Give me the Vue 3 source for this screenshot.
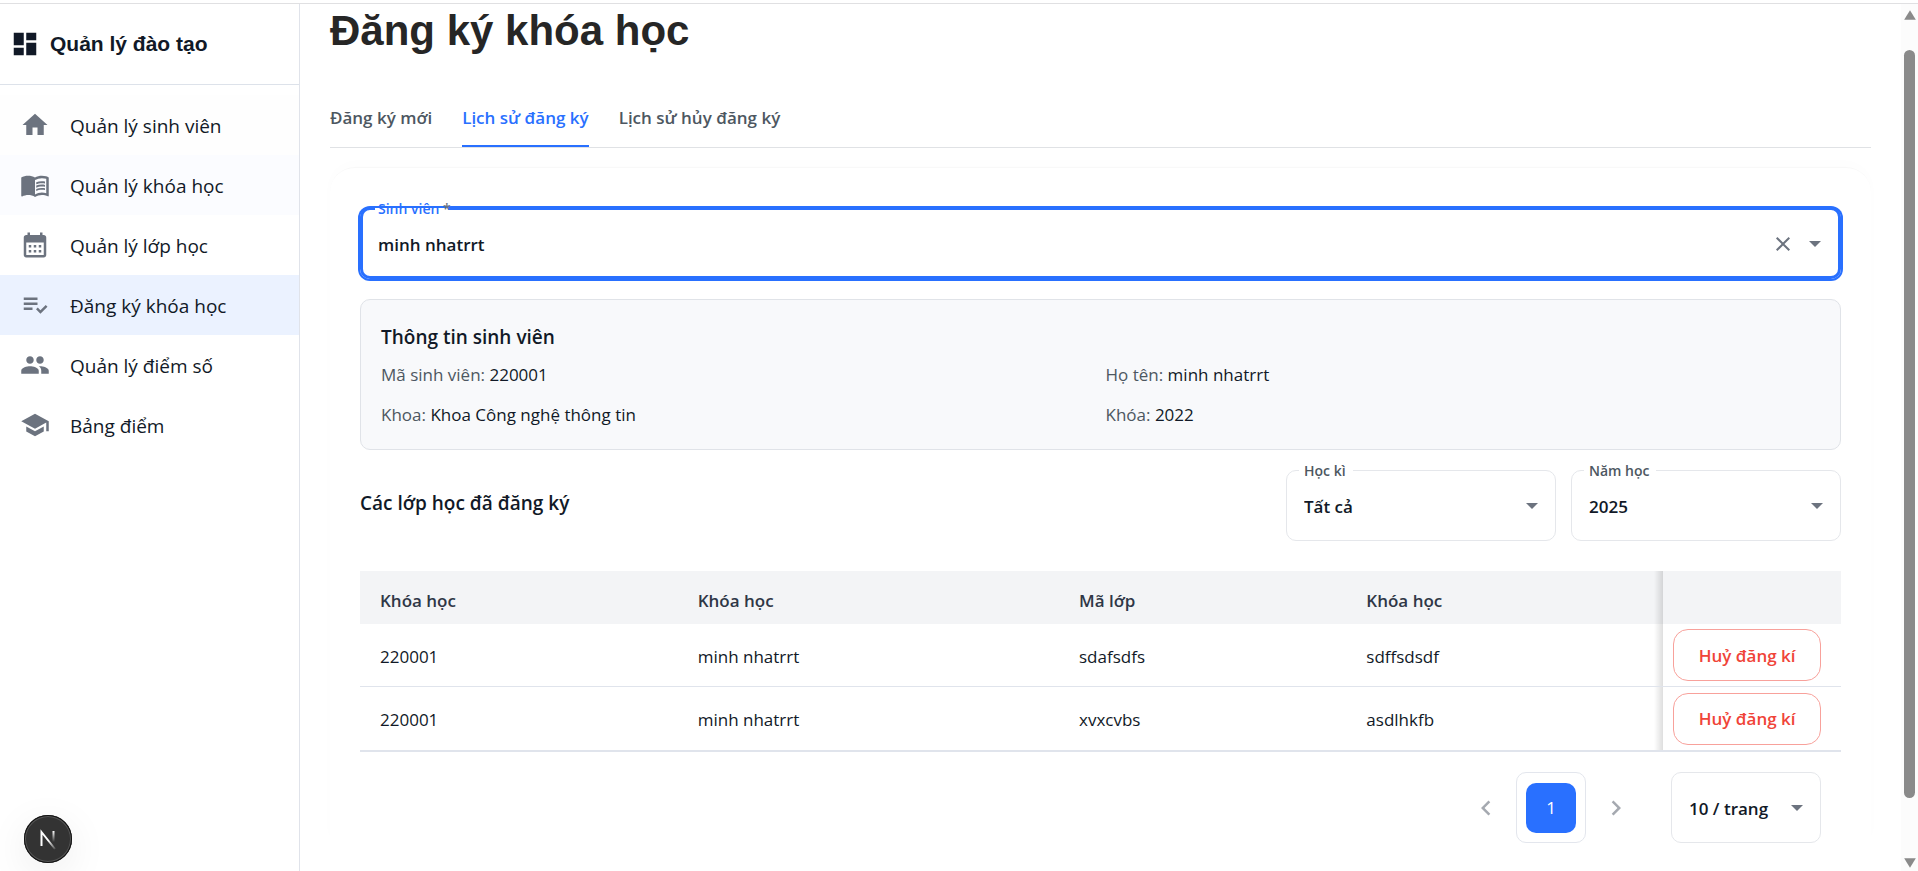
<script setup>
import { ref } from 'vue'

const navItems = [
  { label: 'Quản lý sinh viên', state: 'faint', icon: 'M10 20v-6h4v6h5v-8h3L12 3 2 12h3v8z' },
  {
    label: 'Quản lý khóa học',
    state: 'hovered',
    icon: 'M21 5c-1.11-.35-2.33-.5-3.5-.5-1.95 0-4.05.4-5.5 1.5-1.45-1.1-3.55-1.5-5.5-1.5S2.45 4.9 1 6v14.65c0 .25.25.5.5.5.1 0 .15-.05.25-.05C3.1 20.45 5.05 20 6.5 20c1.95 0 4.05.4 5.5 1.5 1.35-.85 3.8-1.5 5.5-1.5 1.65 0 3.35.3 4.75 1.05.1.05.15.05.25.05.25 0 .5-.25.5-.5V6c-.6-.45-1.25-.75-2-1zm0 13.5c-1.1-.35-2.3-.5-3.5-.5-1.7 0-4.15.65-5.5 1.5V8c1.35-.85 3.8-1.5 5.5-1.5 1.2 0 2.4.15 3.5.5v11.5zM17.5 10.5c.88 0 1.73.09 2.5.26V9.24c-.79-.15-1.64-.24-2.5-.24-1.7 0-3.24.29-4.5.83v1.66c1.13-.64 2.7-.99 4.5-.99zM13 12.49v1.66c1.13-.64 2.7-.99 4.5-.99.88 0 1.73.09 2.5.26V11.9c-.79-.15-1.64-.24-2.5-.24-1.7 0-3.24.3-4.5.83zM17.5 14.33c-1.7 0-3.24.29-4.5.83v1.66c1.13-.64 2.7-.99 4.5-.99.88 0 1.73.09 2.5.26v-1.52c-.79-.16-1.64-.24-2.5-.24z',
  },
  {
    label: 'Quản lý lớp học',
    icon: 'M19 4h-1V2h-2v2H8V2H6v2H5c-1.11 0-1.99.9-1.99 2L3 20c0 1.1.89 2 2 2h14c1.1 0 2-.9 2-2V6c0-1.1-.9-2-2-2zm0 16H5V10h14v10zM9 14H7v-2h2v2zm4 0h-2v-2h2v2zm4 0h-2v-2h2v2zm-8 4H7v-2h2v2zm4 0h-2v-2h2v2zm4 0h-2v-2h2v2z',
  },
  {
    label: 'Đăng ký khóa học',
    state: 'active',
    icon: 'M3 10h11v2H3zm0-4h11v2H3zm0 8h7v2H3zm17.59-2.07-4.25 4.24-2.12-2.12-1.41 1.41L16.34 19 22 13.34z',
  },
  {
    label: 'Quản lý điểm số',
    icon: 'M16 11c1.66 0 2.99-1.34 2.99-3S17.66 5 16 5c-1.66 0-3 1.34-3 3s1.34 3 3 3zm-8 0c1.66 0 2.99-1.34 2.99-3S9.66 5 8 5C6.34 5 5 6.34 5 8s1.34 3 3 3zm0 2c-2.33 0-7 1.17-7 3.5V19h14v-2.5c0-2.33-4.67-3.5-7-3.5zm8 0c-.29 0-.62.02-.97.05 1.16.84 1.97 1.97 1.97 3.45V19h6v-2.5c0-2.33-4.67-3.5-7-3.5z',
  },
  {
    label: 'Bảng điểm',
    icon: 'M5 13.18v4L12 21l7-3.82v-4L12 17l-7-3.82zM12 3 1 9l11 6 9-4.91V17h2V9L12 3z',
  },
]

const tabs = ['Đăng ký mới', 'Lịch sử đăng ký', 'Lịch sử hủy đăng ký']
const activeTab = ref(1)
const student = ref('minh nhatrrt')

const info = [
  ['Mã sinh viên:', '220001'],
  ['Họ tên:', 'minh nhatrrt'],
  ['Khoa:', 'Khoa Công nghệ thông tin'],
  ['Khóa:', '2022'],
]

const filters = [
  { id: 'semester', label: 'Học kì', value: 'Tất cả' },
  { id: 'year', label: 'Năm học', value: '2025' },
]

const columns = ['Khóa học', 'Khóa học', 'Mã lớp', 'Khóa học']
const rows = [
  ['220001', 'minh nhatrrt', 'sdafsdfs', 'sdffsdsdf'],
  ['220001', 'minh nhatrrt', 'xvxcvbs', 'asdlhkfb'],
]
</script>

<template>
  <div class="app">
    <aside class="sidebar">
      <div class="brand">
        <svg class="icon" viewBox="0 0 24 24"><path d="M3 13h8V3H3v10zm0 8h8v-6H3v6zm10 0h8V11h-8v10zm0-18v6h8V3h-8z" /></svg>
        <span>Quản lý đào tạo</span>
      </div>
      <nav class="nav">
        <a v-for="item in navItems" :key="item.label" href="#" class="nav-item" :class="item.state">
          <svg class="icon" viewBox="0 0 24 24"><path :d="item.icon" /></svg>
          <span>{{ item.label }}</span>
        </a>
      </nav>
      <button class="dev-badge" type="button" aria-label="Next.js">
        <svg viewBox="0 0 48 48">
          <defs>
            <linearGradient id="stem" x1="0" y1="0" x2="0" y2="1">
              <stop offset="0" stop-color="#fff" />
              <stop offset="1" stop-color="#fff" stop-opacity="0" />
            </linearGradient>
            <linearGradient id="slash" gradientUnits="userSpaceOnUse" x1="25" y1="25" x2="32" y2="34">
              <stop offset="0" stop-color="#fff" />
              <stop offset="1" stop-color="#fff" stop-opacity="0.1" />
            </linearGradient>
          </defs>
          <path d="M17.5 31V17l13.500 17" fill="none" stroke="url(#slash)" stroke-width="2" />
          <rect x="28.5" y="16" width="2" height="11" fill="url(#stem)" />
        </svg>
      </button>
    </aside>

    <main class="main">
      <h1>Đăng ký khóa học</h1>
      <div class="tabs" role="tablist">
        <button
          v-for="(tab, i) in tabs"
          :key="tab"
          type="button"
          role="tab"
          class="tab"
          :class="{ selected: i === activeTab }"
          :aria-selected="i === activeTab"
          @click="activeTab = i"
        >{{ tab }}</button>
      </div>

      <section class="card">
        <div class="field focused">
          <fieldset><legend>Sinh viên</legend></fieldset>
          <label for="student">Sinh viên <span>*</span></label>
          <input id="student" v-model="student" type="text" />
          <button type="button" class="clear" aria-label="Xóa" @click="student = ''">
            <svg viewBox="0 0 24 24"><path d="M19 6.41 17.59 5 12 10.59 6.41 5 5 6.41 10.59 12 5 17.59 6.41 19 12 13.41 17.59 19 19 17.59 13.41 12z" /></svg>
          </button>
          <svg class="arrow" viewBox="0 0 12 6"><path d="M0 0h12L6 6z" /></svg>
        </div>

        <div class="info">
          <h2>Thông tin sinh viên</h2>
          <div class="info-grid">
            <p v-for="[name, value] in info" :key="name"><span>{{ name }}</span> {{ value }}</p>
          </div>
        </div>

        <div class="toolbar">
          <h2>Các lớp học đã đăng ký</h2>
          <div v-for="f in filters" :key="f.id" class="field filter">
            <fieldset><legend>{{ f.label }}</legend></fieldset>
            <label :for="f.id">{{ f.label }}</label>
            <select :id="f.id"><option>{{ f.value }}</option></select>
            <svg class="arrow" viewBox="0 0 12 6"><path d="M0 0h12L6 6z" /></svg>
          </div>
        </div>

        <table>
          <colgroup>
            <col class="c1" /><col class="c2" /><col class="c3" /><col class="c4" /><col class="c5" />
          </colgroup>
          <thead>
            <tr>
              <th v-for="(c, i) in columns" :key="i">{{ c }}</th>
              <th class="pinned"></th>
            </tr>
          </thead>
          <tbody>
            <tr v-for="(row, r) in rows" :key="r">
              <td v-for="(cell, i) in row" :key="i">{{ cell }}</td>
              <td class="pinned"><button type="button" class="cancel">Huỷ đăng kí</button></td>
            </tr>
          </tbody>
        </table>

        <div class="pagination">
          <button type="button" class="step" aria-label="Trang trước">
            <svg viewBox="0 0 24 24"><path d="M15.41 7.41 14 6l-6 6 6 6 1.41-1.41L10.83 12z" /></svg>
          </button>
          <div class="pages"><button type="button" class="page">1</button></div>
          <button type="button" class="step" aria-label="Trang sau">
            <svg viewBox="0 0 24 24"><path d="M10 6 8.59 7.41 13.17 12l-4.58 4.59L10 18l6-6z" /></svg>
          </button>
          <div class="field page-size">
            <fieldset></fieldset>
            <select aria-label="Số dòng mỗi trang"><option>10 / trang</option></select>
            <svg class="arrow" viewBox="0 0 12 6"><path d="M0 0h12L6 6z" /></svg>
          </div>
        </div>
      </section>
    </main>

    <div class="scrollbar" aria-hidden="true">
      <svg viewBox="0 0 12 10"><path d="M6 1 11 9H1z" /></svg>
      <div class="thumb"></div>
      <svg viewBox="0 0 12 10"><path d="M6 9 11 1H1z" /></svg>
    </div>
  </div>
</template>

<style>
body {
  background: #fff;
}
</style>

<style scoped>
.app {
  box-sizing: border-box;
  display: flex;
  height: calc(100vh - 3px);
  margin-top: 3px;
  overflow: hidden;
  border-top: 1px solid #e0e0e2;
  font-family: 'Open Sans', 'Noto Sans', sans-serif;
  font-size: 17px;
  color: #111927;
}

.app *,
.app *::before,
.app *::after {
  box-sizing: border-box;
}

button,
input,
select {
  font: inherit;
  color: inherit;
  margin: 0;
  padding: 0;
  border: 0;
  background: none;
  outline: none;
}

h1,
h2,
p {
  margin: 0;
}

/* Sidebar */
.sidebar {
  position: relative;
  flex: 0 0 300px;
  border-right: 1px solid #e0e3ea;
}

.brand {
  display: flex;
  align-items: center;
  gap: 10px;
  height: 81px;
  padding-left: 10px;
  border-bottom: 1px solid #dde2ea;
  font: bold 21px 'Liberation Sans', Arial, sans-serif;
}

.icon {
  width: 30px;
  height: 30px;
  fill: #111927;
}

.nav {
  display: flex;
  flex-direction: column;
  padding-top: 10px;
}

.nav-item {
  display: flex;
  align-items: center;
  gap: 20px;
  height: 60px;
  padding-left: 20px;
  color: #111927;
  font-size: 19px;
  text-decoration: none;
}

.nav-item span {
  padding-top: 2px;
}

.nav-item .icon {
  fill: #6c737f;
}

.nav-item.faint {
  background: #fefefe;
}

.nav-item.hovered {
  background: #fbfcff;
}

.nav-item.active {
  background: #ebf2ff;
}

.dev-badge {
  position: absolute;
  left: 24px;
  bottom: 8px;
  width: 48px;
  height: 48px;
  border-radius: 50%;
  background: #333;
  box-shadow: inset 0 0 0 1px #111, inset 0 0 0 2px #555, 0 10px 40px rgba(0, 0, 0, 0.08);
}

.dev-badge svg {
  display: block;
  width: 48px;
  height: 48px;
}

/* Main */
.main {
  flex: 1;
  min-width: 0;
  padding: 0 30px;
}

h1 {
  font: bold 42px/54px 'Liberation Sans', Arial, sans-serif;
  color: #262626;
}

.tabs {
  display: flex;
  gap: 30px;
  height: 61px;
  margin-top: 29px;
  border-bottom: 1px solid #e0e2e5;
}

.tab {
  border-bottom: 2px solid transparent;
  color: #4d5761;
  font-weight: 600;
  padding-top: 2px;
  white-space: nowrap;
}

.tab.selected {
  border-color: #2970ff;
  color: #2970ff;
}

.card {
  margin-top: 19px;
  padding: 40px 30px 0;
  border-top: 1px solid #f8f8f8;
  border-radius: 25px 25px 0 0;
  box-shadow: 0 -4px 14px rgba(0, 0, 0, 0.01);
}

/* Outlined fields */
.field {
  position: relative;
  display: flex;
  align-items: center;
  height: 71px;
  padding: 0 18px;
  border-radius: 10px;
  font-weight: 600;
}

.field fieldset {
  position: absolute;
  inset: 0;
  top: -8px;
  min-width: 0;
  margin: 0;
  padding: 0 12px;
  border: 1px solid #e5e7eb;
  border-radius: 10px;
  pointer-events: none;
}

.field fieldset:empty {
  top: 0;
}

.field legend {
  height: 16px;
  padding: 0 6px;
  font-size: 14px;
  font-weight: 600;
  line-height: 16px;
  visibility: hidden;
}

.field label {
  position: absolute;
  top: -9px;
  left: 18px;
  color: #4d5761;
  font-size: 14px;
  font-weight: 600;
  line-height: 20px;
}

.field input,
.field select {
  flex: 1;
  min-width: 0;
  height: 50px;
  padding-top: 2px;
  appearance: none;
}

.arrow {
  width: 12px;
  height: 6px;
  fill: #6c737f;
  pointer-events: none;
}

.focused {
  padding-right: 20px;
  box-shadow: 0 0 0 2px #2970ff;
}

.focused fieldset {
  border: 3px solid #2970ff;
}

.focused label {
  color: #2970ff;
}

.focused label span {
  color: #6c737f;
}

.clear {
  width: 24px;
  height: 24px;
  margin-right: 14px;
}

.clear svg {
  display: block;
  width: 24px;
  height: 24px;
  fill: #6c737f;
}

/* Student summary */
.info {
  margin-top: 20px;
  padding: 20px;
  border: 1px solid #e0e3e8;
  border-radius: 10px;
  background: #f8f9fb;
}

h2 {
  font-size: 19px;
  font-weight: 600;
  line-height: 34px;
}

.info-grid {
  display: grid;
  grid-template-columns: 1fr 1fr;
  row-gap: 12px;
  column-gap: 10px;
  margin-top: 7px;
  line-height: 28px;
}

.info-grid span {
  color: #4d5761;
}

/* Class list */
.toolbar {
  display: flex;
  align-items: center;
  gap: 15px;
  margin-top: 20px;
}

.toolbar h2 {
  flex: 1;
  padding-bottom: 5px;
}

.filter {
  width: 270px;
}

table {
  width: 100%;
  margin-top: 30px;
  border-collapse: separate;
  border-spacing: 0;
  table-layout: fixed;
}

.c1 { width: 21.45%; }
.c2 { width: 25.75%; }
.c3 { width: 19.4%; }
.c4 { width: 21.4%; }
.c5 { width: 12%; }

th,
td {
  padding: 2px 20px 0;
  text-align: left;
}

th {
  height: 53px;
  padding-top: 6px;
  background: #f3f4f6;
  color: #2f3746;
  font-weight: 600;
}

td {
  height: 63px;
  border-bottom: 1px solid #e0e4ec;
}

tbody tr:last-child td {
  height: 65px;
  border-bottom-width: 2px;
}

th.pinned,
td.pinned {
  position: relative;
  padding-top: 0;
  padding-left: 10px;
}

.pinned::before {
  content: '';
  position: absolute;
  top: 0;
  right: 100%;
  bottom: 0;
  width: 9px;
  background: linear-gradient(to right, rgba(0, 0, 0, 0), rgba(0, 0, 0, 0.13));
}

.cancel {
  display: block;
  width: 100%;
  height: 52px;
  border: 1px solid #f8a19b;
  border-radius: 15px;
  color: #f04438;
  font-weight: 600;
  white-space: nowrap;
}

.pagination {
  display: flex;
  align-items: center;
  justify-content: flex-end;
  padding: 20px 20px 0 0;
}

.step {
  width: 30px;
  height: 30px;
}

.step svg {
  display: block;
  width: 30px;
  height: 30px;
  fill: #a5a9b0;
}

.pages {
  display: flex;
  align-items: center;
  height: 71px;
  margin: 0 15px;
  padding: 0 9px;
  border: 1px solid #e3e6ed;
  border-radius: 10px;
}

.page {
  width: 50px;
  height: 50px;
  border-radius: 10px;
  background: #2970ff;
  color: #fff;
}

.page-size {
  width: 150px;
  margin-left: 40px;
}

/* Scroll track */
.scrollbar {
  display: flex;
  flex-direction: column;
  align-items: center;
  width: 17px;
  padding: 5px 0 2px;
  background: #fcfcfc;
}

.scrollbar svg {
  flex: none;
  width: 14px;
  height: 12px;
  fill: #8a8a8a;
}

.thumb {
  flex: 1;
  width: 11px;
  margin: 29px 0 59px;
  border-radius: 6px;
  background: #8a8a8a;
}
</style>
